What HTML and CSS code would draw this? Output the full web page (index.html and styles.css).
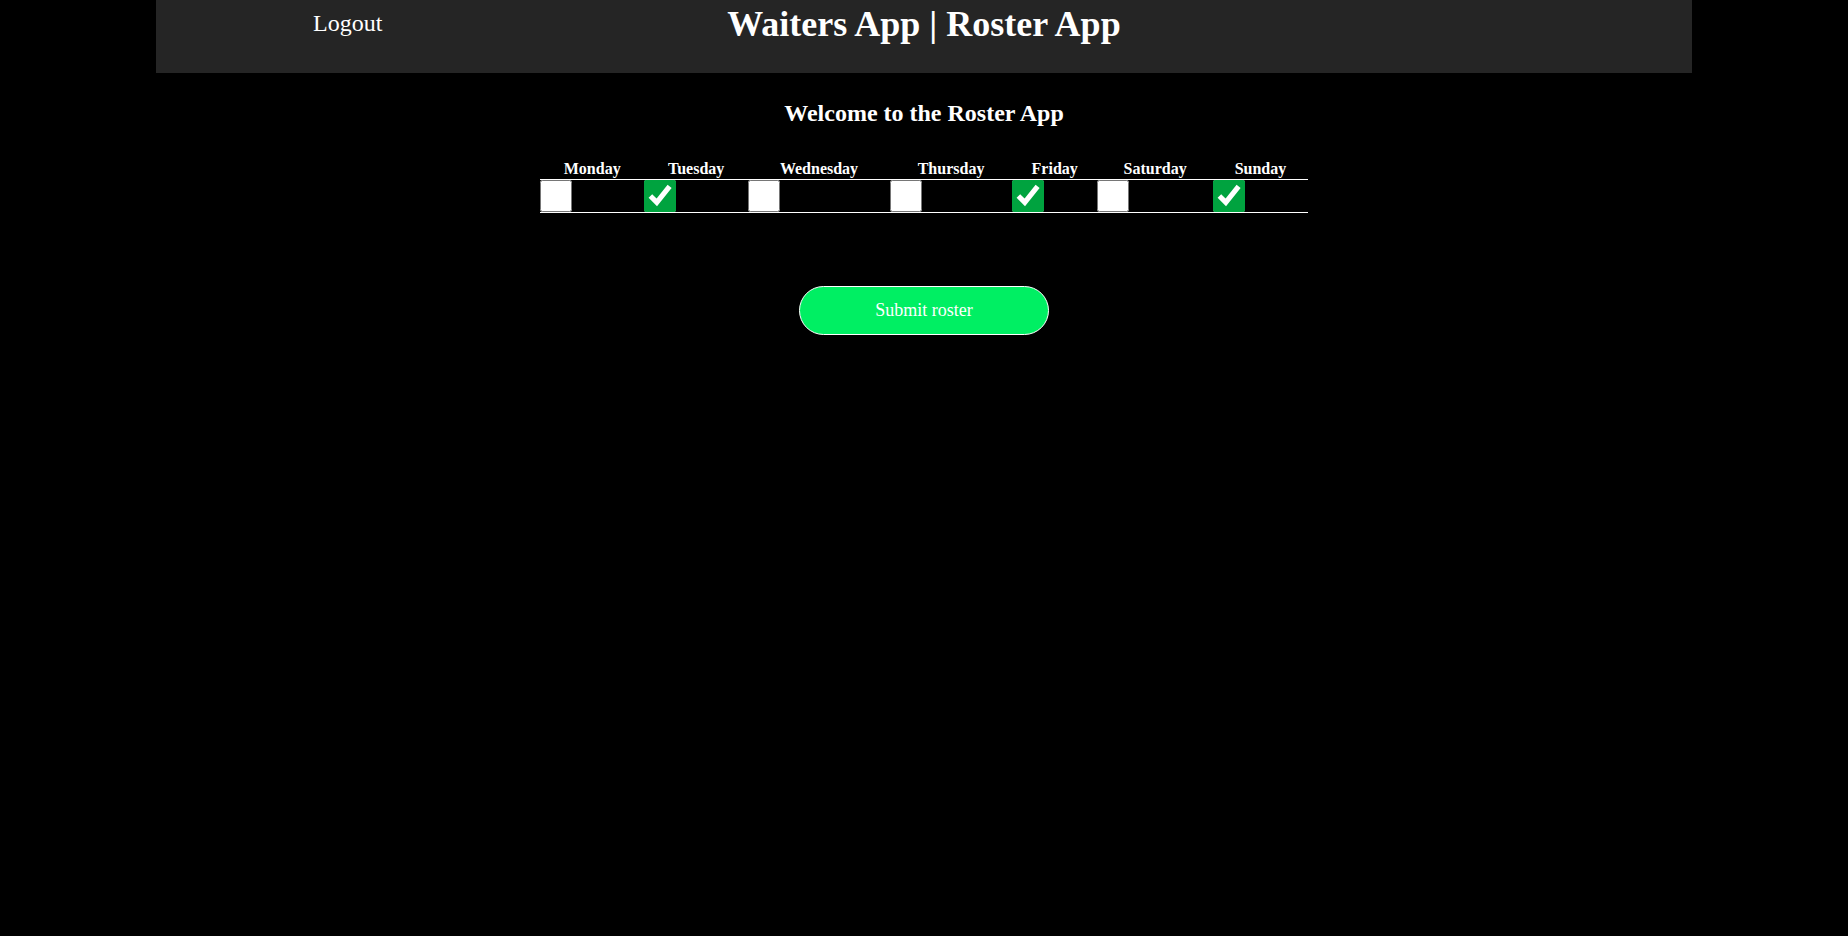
FILE: index.html
```html
<!DOCTYPE html>
<html lang="en">
<head>
<meta charset="utf-8">
<title>Waiters App | Roster App</title>
<link rel="stylesheet" href="styles.css">
</head>
<body>
<header class="topbar">
  <div class="topbar-left"><a class="logout" href="#">Logout</a></div>
  <h1 class="app-title">Waiters App | Roster App</h1>
  <div class="topbar-right"></div>
</header>
<main class="content">
  <h2 class="welcome">Welcome to the Roster App</h2>
  <form class="roster-form">
    <table class="roster">
      <thead>
        <tr>
          <th>Monday</th><th>Tuesday</th><th>Wednesday</th><th>Thursday</th><th>Friday</th><th>Saturday</th><th>Sunday</th>
        </tr>
      </thead>
      <tbody>
        <tr>
          <td><input class="day-check" type="checkbox" name="day" value="Monday"></td>
          <td><input class="day-check" type="checkbox" name="day" value="Tuesday" checked></td>
          <td><input class="day-check" type="checkbox" name="day" value="Wednesday"></td>
          <td><input class="day-check" type="checkbox" name="day" value="Thursday"></td>
          <td><input class="day-check" type="checkbox" name="day" value="Friday" checked></td>
          <td><input class="day-check" type="checkbox" name="day" value="Saturday"></td>
          <td><input class="day-check" type="checkbox" name="day" value="Sunday" checked></td>
        </tr>
      </tbody>
    </table>
    <button class="submit-btn" type="button">Submit roster</button>
  </form>
</main>
</body>
</html>
```

FILE: styles.css
```css
html, body {
  margin: 0;
  padding: 0;
  background: #000;
  color: #fff;
  font-family: "Liberation Serif", "Times New Roman", serif;
}

.topbar {
  width: 1536px;
  height: 73px;
  margin: 0 auto;
  background: #252525;
  display: grid;
  grid-template-columns: 1fr auto 1fr;
  align-items: start;
  box-sizing: border-box;
}

.topbar-left {
  padding-left: 157px;
  padding-top: 8px;
}

.logout {
  color: #fff;
  text-decoration: none;
  font-size: 24px;
  line-height: 30px;
}

.app-title {
  margin: 0;
  padding-top: 4px;
  font-size: 36px;
  font-weight: bold;
  line-height: 41px;
}

.content {
  display: flex;
  flex-direction: column;
  align-items: center;
}

.welcome {
  margin: 26px 0 0;
  font-size: 24px;
  line-height: 28px;
}

.roster-form {
  display: flex;
  flex-direction: column;
  align-items: center;
}

.roster {
  width: 768px;
  margin-top: 33px;
  border-collapse: collapse;
}

.roster th {
  padding: 0 1px 1px;
  font-size: 16px;
  font-weight: bold;
  line-height: 18px;
  text-align: center;
}

.roster thead tr,
.roster tbody tr {
  border-bottom: 1px solid #fff;
}

.roster td {
  padding: 0;
  height: 32px;
}

.day-check {
  display: block;
  width: 32px;
  height: 32px;
  margin: 0;
  accent-color: #00a33f;
}

.submit-btn {
  margin-top: 73px;
  width: 250px;
  height: 49px;
  border: 1px solid #fff;
  border-radius: 25px;
  background: #00ef63;
  color: #fff;
  font-family: "Liberation Serif", "Times New Roman", serif;
  font-size: 18px;
  cursor: pointer;
}
```
